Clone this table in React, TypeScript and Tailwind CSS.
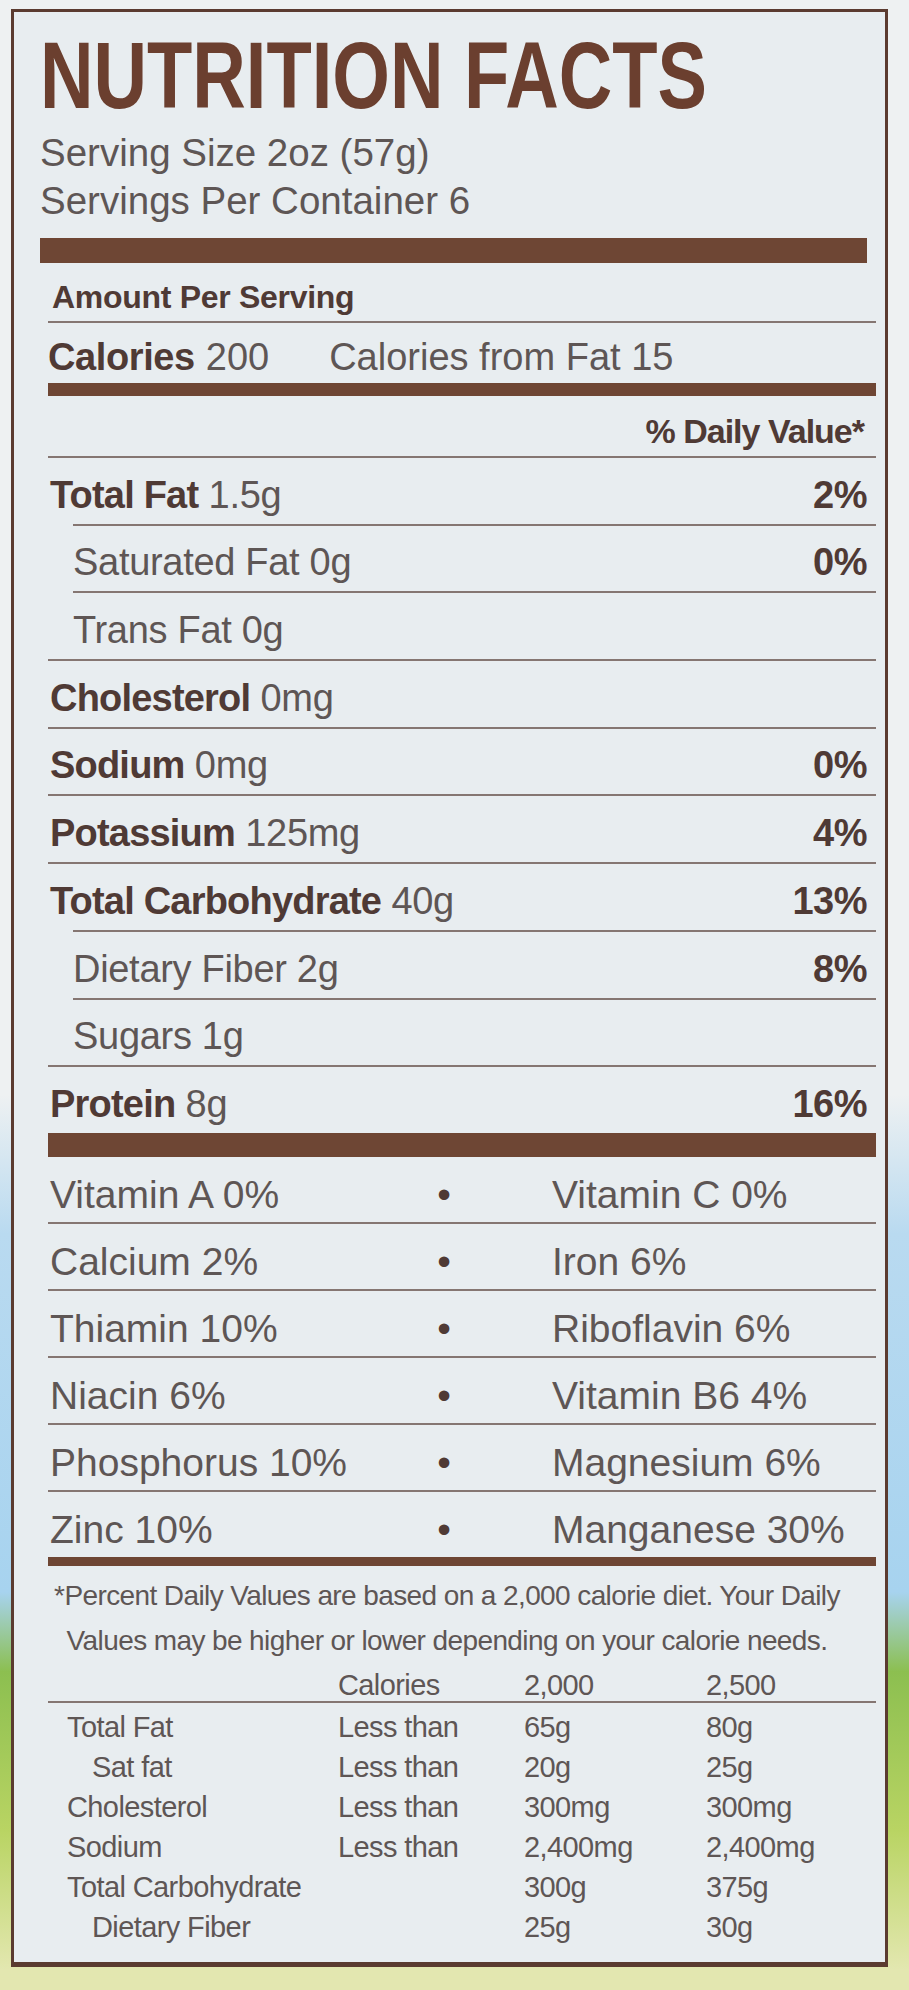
const nutrients = [
  { label: "Total Fat", amount: "1.5g", dv: "2%" },
  { label: "Saturated Fat 0g", dv: "0%", sub: true },
  { label: "Trans Fat 0g", sub: true },
  { label: "Cholesterol", amount: "0mg" },
  { label: "Sodium", amount: "0mg", dv: "0%" },
  { label: "Potassium", amount: "125mg", dv: "4%" },
  { label: "Total Carbohydrate", amount: "40g", dv: "13%" },
  { label: "Dietary Fiber 2g", dv: "8%", sub: true },
  { label: "Sugars 1g", sub: true },
  { label: "Protein", amount: "8g", dv: "16%" },
]

const vitamins = [
  ["Vitamin A 0%", "Vitamin C 0%"],
  ["Calcium 2%", "Iron 6%"],
  ["Thiamin 10%", "Riboflavin 6%"],
  ["Niacin 6%", "Vitamin B6 4%"],
  ["Phosphorus 10%", "Magnesium 6%"],
  ["Zinc 10%", "Manganese 30%"],
]

const limits = [
  { label: "Total Fat", less: true, a: "65g", b: "80g" },
  { label: "Sat fat", less: true, a: "20g", b: "25g", sub: true },
  { label: "Cholesterol", less: true, a: "300mg", b: "300mg" },
  { label: "Sodium", less: true, a: "2,400mg", b: "2,400mg" },
  { label: "Total Carbohydrate", a: "300g", b: "375g" },
  { label: "Dietary Fiber", a: "25g", b: "30g", sub: true },
]

export default function App() {
  return (
    <div className="w-[909px] h-[1990px] overflow-hidden pt-[9px] font-['Liberation_Sans',Arial,sans-serif] bg-[linear-gradient(180deg,#eef1f2_0%,#eef1f2_55%,#b9daf0_62%,#a7d3ef_80%,#8cbf50_84%,#b9d463_92%,#e3e7b0_99%)]">
      <div className="ml-[11px] w-[877px] border-[#5b3b30] border-t-[3px] border-x-[3px] border-b-[5px] bg-[#e8edf0] text-[#5e5655]">
        {/* header */}
        <div className="pl-[26px] pr-[18px] pt-[16px]">
          <h1 className="h-[95px] text-[95px] leading-[95px] font-bold text-[#6b3f2f] whitespace-nowrap">
            <span className="inline-block origin-left scale-x-[0.78] leading-[95px]">NUTRITION FACTS</span>
          </h1>
          <div className="mt-[6px] text-[38.5px] leading-[48px]">Serving Size 2oz (57g)</div>
          <div className="text-[38.5px] leading-[48px]">Servings Per Container 6</div>
          <div className="mt-[13px] h-[25px] bg-[#6e4634]" />
        </div>

        <div className="pl-[34px] pr-[9px] pb-[15px]">
          <div className="h-[60px] border-b-2 border-[#857672] flex items-end pb-[8px] pl-[4px] text-[32px] leading-none font-bold tracking-[-0.3px] text-[#4f3a35]">
            Amount Per Serving
          </div>
          <div className="h-[60px] flex items-end pb-[7px] text-[38px] leading-none whitespace-nowrap">
            <span className="font-bold tracking-[-0.4px] text-[#4f3a35]">Calories</span>
            <span className="ml-[11px]">200</span>
            <span className="ml-[60px]">Calories from Fat 15</span>
          </div>
          <div className="h-[13px] bg-[#6e4634]" />
          <div className="h-[60px] flex items-end justify-end pb-[8px] pr-[12px] text-[34px] leading-none font-bold tracking-[-1px] text-[#4f3a35]">
            % Daily Value*
          </div>

          {nutrients.map((n) => (
            <div
              key={n.label}
              className={`h-[67.7px] border-t-2 border-[#857672] flex items-end justify-between pb-[10px] pr-[9px] text-[38px] leading-none whitespace-nowrap ${
                n.sub ? "ml-[25px]" : "pl-[2px]"
              }`}
            >
              <span>
                {n.sub ? (
                  <span className="tracking-[-0.3px]">{n.label}</span>
                ) : (
                  <>
                    <span className="font-bold tracking-[-0.8px] text-[#4f3a35]">{n.label}</span>
                    <span className="tracking-[-0.3px]"> {n.amount}</span>
                  </>
                )}
              </span>
              {n.dv && <span className="font-bold tracking-[-0.5px] text-[#4f3a35]">{n.dv}</span>}
            </div>
          ))}

          <div className="h-[24px] bg-[#6e4634]" />

          {vitamins.map(([a, b], i) => (
            <div
              key={a}
              className={`grid grid-cols-[384px_24px_1fr] items-end pb-[8px] text-[39px] leading-none whitespace-nowrap ${
                i < vitamins.length - 1 ? "h-[67px] border-b-2 border-[#857672]" : "h-[65px]"
              }`}
            >
              <span className="pl-[2px]">{a}</span>
              <span className="text-center text-[#4f3a35]">•</span>
              <span className="pl-[96px]">{b}</span>
            </div>
          ))}

          <div className="h-[9px] bg-[#6e4634]" />

          <div className="mt-[7px] pr-[30px] text-center text-[28px] leading-[45px] tracking-[-0.6px] whitespace-nowrap">
            <div>*Percent Daily Values are based on a 2,000 calorie diet. Your Daily</div>
            <div>Values may be higher or lower depending on your calorie needs.</div>
          </div>

          <div className="grid grid-cols-[290px_186px_182px_1fr] h-[40px] border-b-2 border-[#857672] items-end pb-[1px] text-[29px] leading-none tracking-[-0.6px] whitespace-nowrap">
            <span />
            <span>Calories</span>
            <span>2,000</span>
            <span>2,500</span>
          </div>
          <div className="mt-[4px]">
            {limits.map((r) => (
              <div
                key={r.label}
                className="grid grid-cols-[290px_186px_182px_1fr] h-[40px] text-[29px] leading-[40px] tracking-[-0.6px] whitespace-nowrap"
              >
                <span className={r.sub ? "pl-[44px]" : "pl-[19px]"}>{r.label}</span>
                <span>{r.less ? "Less than" : ""}</span>
                <span>{r.a}</span>
                <span>{r.b}</span>
              </div>
            ))}
          </div>
        </div>
      </div>
    </div>
  )
}
